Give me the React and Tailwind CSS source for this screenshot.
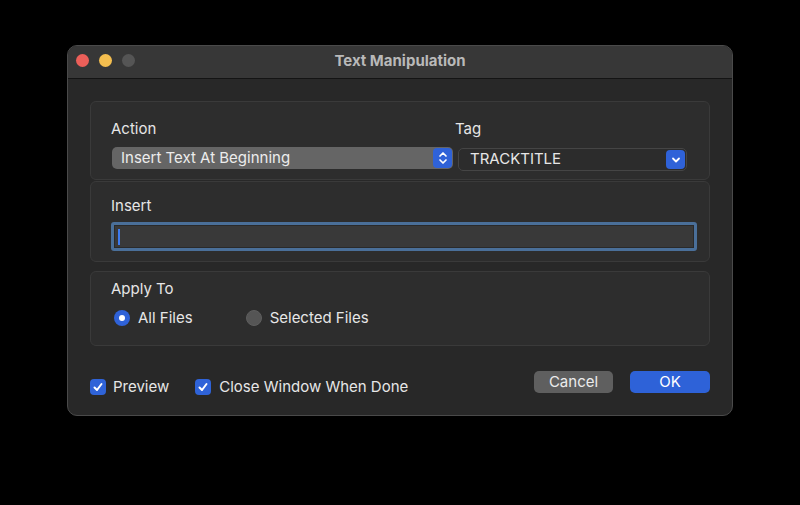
import React from 'react';

const font = { fontFamily: 'Inter, "Noto Sans", "Liberation Sans", sans-serif' };

function UpDown() {
  return (
    <svg width="10" height="14" viewBox="0 0 10 14" fill="none" stroke="white" strokeWidth="1.7" strokeLinecap="round" strokeLinejoin="round">
      <path d="M2 5 L5 2 L8 5" />
      <path d="M2 9 L5 12 L8 9" />
    </svg>
  );
}

function Down() {
  return (
    <svg width="10" height="8" viewBox="0 0 10 8" fill="none" stroke="white" strokeWidth="1.8" strokeLinecap="round" strokeLinejoin="round">
      <path d="M2 2.5 L5 5.5 L8 2.5" />
    </svg>
  );
}

function Check() {
  return (
    <span className="w-[16px] h-[16px] rounded-[4px] bg-[#2f63d8] flex items-center justify-center shrink-0">
      <svg width="12" height="12" viewBox="0 0 12 12" fill="none" stroke="white" strokeWidth="2" strokeLinecap="round" strokeLinejoin="round">
        <path d="M2.5 6.5 L5 9 L9.5 3" />
      </svg>
    </span>
  );
}

export default function App() {
  return (
    <div className="w-[800px] h-[505px] bg-black pt-[45px] pl-[67px] text-[#e4e4e4]" style={font}>
      <div className="w-[666px] h-[371px] rounded-[10px] border border-[#4a4a4a] bg-[#282828] overflow-hidden flex flex-col">
        {/* Title bar */}
        <div className="h-[33px] shrink-0 bg-[#373737] border-b border-[#141414] relative flex items-center justify-center pb-[2px]">
          <div className="absolute left-[8px] top-[8px] flex gap-[10px]">
            <span className="w-[13px] h-[13px] rounded-full bg-[#ec5f59]" />
            <span className="w-[13px] h-[13px] rounded-full bg-[#f4be4f]" />
            <span className="w-[13px] h-[13px] rounded-full bg-[#555555]" />
          </div>
          <span className="text-[15px] font-bold text-[#b9b9b9]">Text Manipulation</span>
        </div>

        {/* Body */}
        <div className="px-[22px] pt-[22px] flex flex-col">
          {/* Action / Tag */}
          <div className="h-[79px] rounded-[6px] border border-[#3a3a3a] bg-[#2d2d2d] pl-[20px] pr-[22px] pt-[17px] flex gap-[2px]">
            <div className="w-[342px] flex flex-col">
              <div className="h-[20px] text-[15px] leading-[20px] text-[#e6e6e6]">Action</div>
              <div className="mt-[8px] ml-[1px] h-[22px] rounded-[5px] bg-[#656565] flex items-center justify-between pl-[9px] pr-[1px]">
                <span className="text-[15px] text-[#ececec]">Insert Text At Beginning</span>
                <span className="w-[19px] h-[20px] rounded-[4px] bg-[#2f62d8] flex items-center justify-center">
                  <UpDown />
                </span>
              </div>
            </div>
            <div className="flex-1 flex flex-col">
              <div className="h-[20px] text-[15px] leading-[20px] text-[#e6e6e6]">Tag</div>
              <div className="mt-[9px] ml-[3px] h-[23px] rounded-[5px] border border-[#454545] bg-[#2c2c2c] flex items-center justify-between pl-[11px] pr-[1px]">
                <span className="text-[15px] text-[#e6e6e6]">TRACKTITLE</span>
                <span className="w-[19px] h-[19px] rounded-[4px] bg-[#2f62d8] flex items-center justify-center">
                  <Down />
                </span>
              </div>
            </div>
          </div>

          {/* Insert */}
          <div className="mt-[1px] h-[81px] rounded-[6px] border border-[#3a3a3a] bg-[#2d2d2d] pl-[20px] pr-[12px] pt-[14px] flex flex-col">
            <div className="h-[20px] text-[15px] leading-[20px] text-[#e6e6e6]">Insert</div>
            <div className="mt-[6px] h-[29px] rounded-[3px] bg-[#4a6f99] p-[3px]">
              <div className="h-full bg-[#393939] border border-[#2a2a2a] flex items-center pl-[3px]">
                <span className="w-[2px] h-[16px] bg-[#3d7bf0]" />
              </div>
            </div>
          </div>

          {/* Apply To */}
          <div className="mt-[9px] h-[75px] rounded-[6px] border border-[#3a3a3a] bg-[#2d2d2d] pl-[20px] pt-[7px] flex flex-col">
            <div className="h-[20px] text-[15px] leading-[20px] text-[#e6e6e6]">Apply To</div>
            <div className="mt-[9px] h-[20px] flex items-center">
              <span className="ml-[3px] w-[16px] h-[16px] rounded-full bg-[#2f62d8] flex items-center justify-center">
                <span className="w-[6px] h-[6px] rounded-full bg-white" />
              </span>
              <span className="ml-[8px] text-[15px] text-[#e6e6e6]">All Files</span>
              <span className="ml-[53px] w-[16px] h-[16px] rounded-full bg-[#555555] border border-[#5e5e5e]" />
              <span className="ml-[8px] text-[15px] text-[#e6e6e6]">Selected Files</span>
            </div>
          </div>

          {/* Bottom row */}
          <div className="mt-[25px] flex items-start">
            <div className="flex items-center mt-[5px]">
              <Check />
              <span className="ml-[7px] text-[15px] text-[#e6e6e6]">Preview</span>
              <span className="ml-[26px]"><Check /></span>
              <span className="ml-[8px] text-[15px] text-[#e6e6e6]">Close Window When Done</span>
            </div>
            <div className="ml-auto flex gap-[17px]">
              <button className="w-[79px] h-[22px] rounded-[5px] bg-[#5f5f5f] text-[15px] text-[#ececec]">Cancel</button>
              <button className="w-[80px] h-[22px] rounded-[5px] bg-[#2e62d8] text-[15px] text-white">OK</button>
            </div>
          </div>
        </div>
      </div>
    </div>
  );
}
